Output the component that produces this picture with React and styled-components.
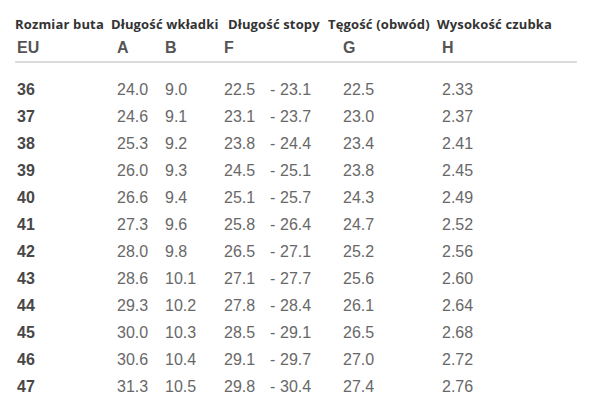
import React from "react";
import styled, { createGlobalStyle } from "styled-components";

const Global = createGlobalStyle`
  html, body { margin: 0; padding: 0; background: #fff; }
  body { width: 592px; height: 409px; overflow: hidden; }
`;

const Table = styled.div`
  padding: 15px 15px 0 15px;
  width: 562px;
`;

const GroupRow = styled.div`
  display: grid;
  grid-template-columns: 96px 117px 100px 109px 1fr;
  font-family: "Open Sans", sans-serif;
  font-weight: 700;
  font-size: 13px;
  line-height: 18px;
  letter-spacing: 0.15px;
  color: #333;
  white-space: nowrap;
`;

const COLS = "100px 48px 59px 46px 10px 63px 99px 1fr";

const LetterRow = styled.div`
  display: grid;
  grid-template-columns: ${COLS};
  margin-top: 6px;
  padding: 0 0 4px 2px;
  border-bottom: 2px solid #dcdcdc;
  font-family: "Liberation Sans", Arial, sans-serif;
  font-weight: 700;
  font-size: 16px;
  line-height: 18px;
  color: #555;
`;

const Letter = styled.div`
  grid-column: ${(p) => p.$span || "auto"};
`;

const Body = styled.div`
  margin-top: 13px;
  padding-left: 2px;
`;

const Row = styled.div`
  display: grid;
  grid-template-columns: ${COLS};
  height: 27px;
  line-height: 27px;
  font-family: "Liberation Sans", Arial, sans-serif;
  font-size: 16px;
  color: #686868;
  white-space: nowrap;
`;

const Size = styled.div`
  font-weight: 700;
  color: #474747;
`;

const Cell = styled.div``;

const data = [
  ["36", "24.0", "9.0", "22.5", "23.1", "22.5", "2.33"],
  ["37", "24.6", "9.1", "23.1", "23.7", "23.0", "2.37"],
  ["38", "25.3", "9.2", "23.8", "24.4", "23.4", "2.41"],
  ["39", "26.0", "9.3", "24.5", "25.1", "23.8", "2.45"],
  ["40", "26.6", "9.4", "25.1", "25.7", "24.3", "2.49"],
  ["41", "27.3", "9.6", "25.8", "26.4", "24.7", "2.52"],
  ["42", "28.0", "9.8", "26.5", "27.1", "25.2", "2.56"],
  ["43", "28.6", "10.1", "27.1", "27.7", "25.6", "2.60"],
  ["44", "29.3", "10.2", "27.8", "28.4", "26.1", "2.64"],
  ["45", "30.0", "10.3", "28.5", "29.1", "26.5", "2.68"],
  ["46", "30.6", "10.4", "29.1", "29.7", "27.0", "2.72"],
  ["47", "31.3", "10.5", "29.8", "30.4", "27.4", "2.76"],
];

export default function App() {
  return (
    <>
      <Global />
      <Table>
        <GroupRow>
          <span>Rozmiar buta</span>
          <span>Długość wkładki</span>
          <span>Długość stopy</span>
          <span>Tęgość (obwód)</span>
          <span>Wysokość czubka</span>
        </GroupRow>
        <LetterRow>
          <Letter>EU</Letter>
          <Letter>A</Letter>
          <Letter>B</Letter>
          <Letter $span="span 3">F</Letter>
          <Letter>G</Letter>
          <Letter>H</Letter>
        </LetterRow>
        <Body>
          {data.map((r) => (
            <Row key={r[0]}>
              <Size>{r[0]}</Size>
              <Cell>{r[1]}</Cell>
              <Cell>{r[2]}</Cell>
              <Cell>{r[3]}</Cell>
              <Cell>-</Cell>
              <Cell>{r[4]}</Cell>
              <Cell>{r[5]}</Cell>
              <Cell>{r[6]}</Cell>
            </Row>
          ))}
        </Body>
      </Table>
    </>
  );
}
